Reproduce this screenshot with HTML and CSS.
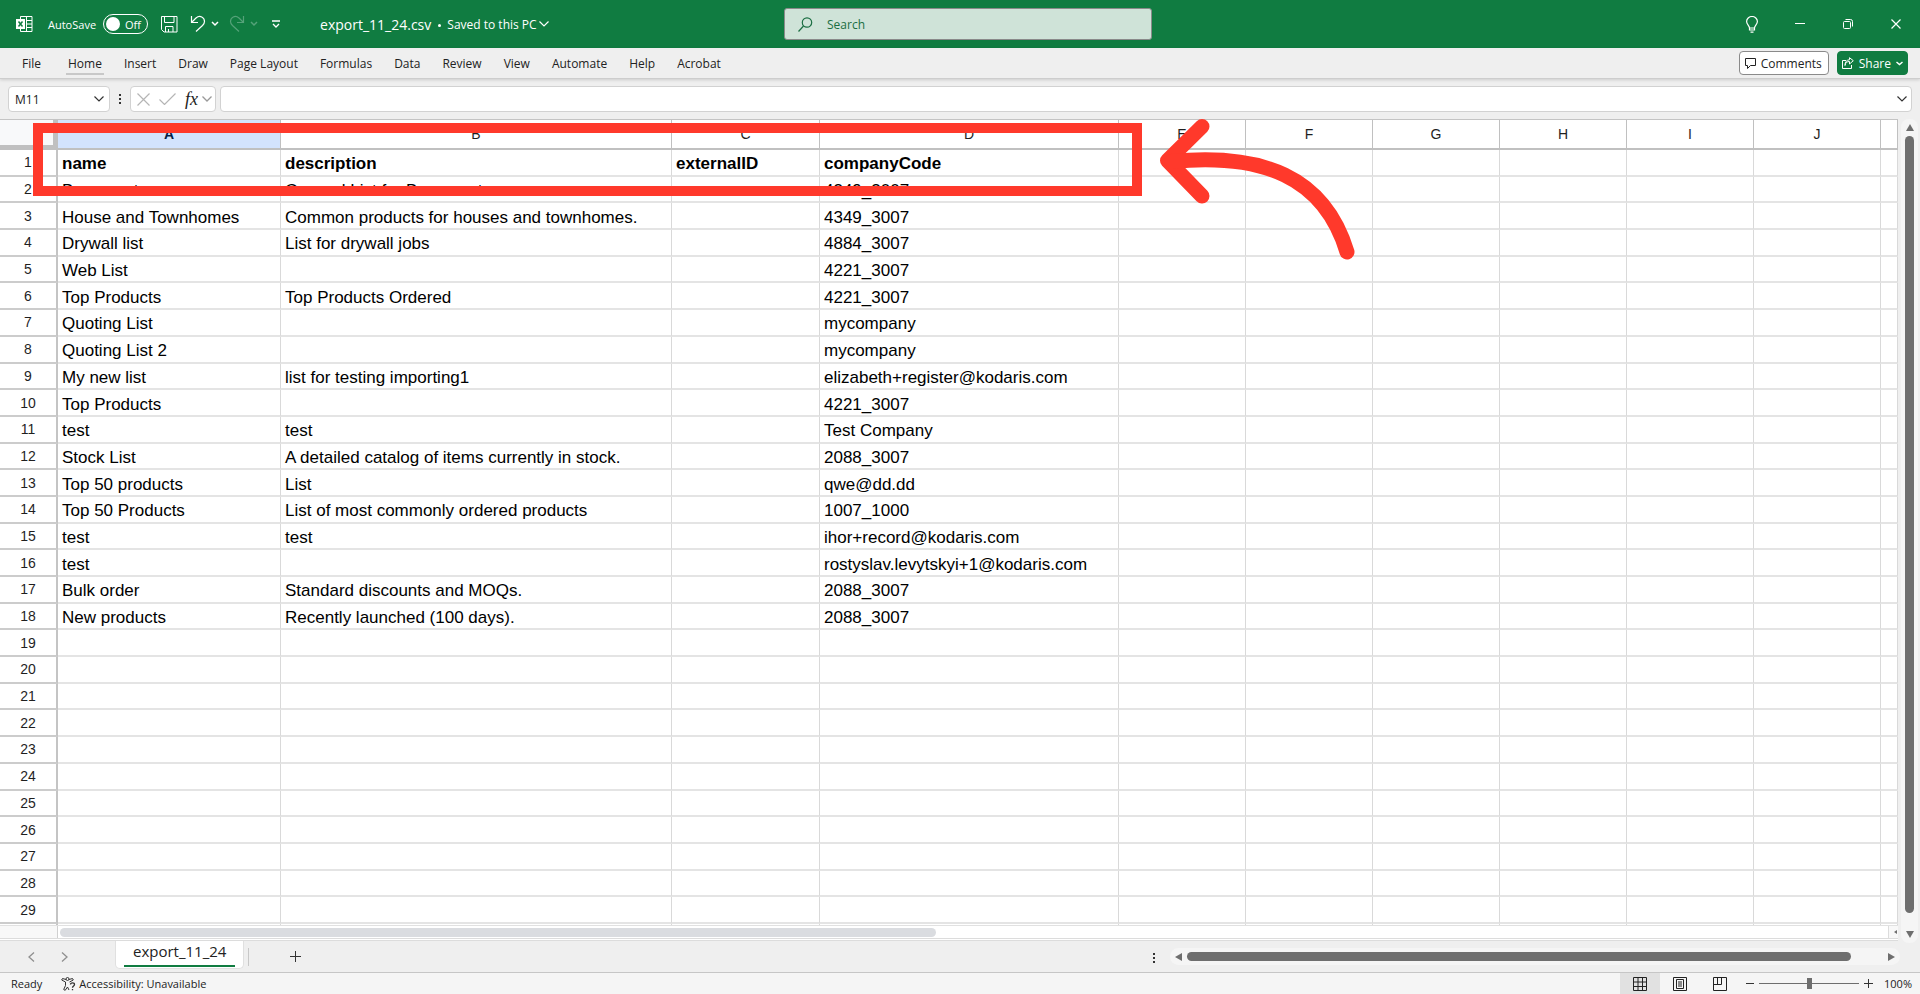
FILE: index.html
```html
<!DOCTYPE html>
<html lang="en">
<head>
  <meta charset="UTF-8">
  <meta name="viewport" content="width=device-width, initial-scale=1.0">
  <title>export_11_24.csv</title>
  <link rel="stylesheet" href="styles.css">
</head>
<body>
  <header class="titlebar">
    <div class="title-left">
      <svg class="app-icon" width="17" height="16" viewBox="0 0 17 16" fill="none" stroke="#fff">
        <path d="M4.500 3V.5H16v15H4.500V13M10.500.5v15M10 4.500h6M10 8h6M10 11.500h6"/>
        <path d="M0 3h9v10H0z" fill="#fff" stroke="none"/>
        <path d="M2.500 5.500l4 5M6.500 5.500l-4 5" stroke="#107c41" stroke-width="1.500"/>
      </svg>
      <label class="autosave" for="autosave">AutoSave</label>
      <span class="toggle">
        <input type="checkbox" id="autosave" role="switch">
        <span class="toggle-text">Off</span>
      </span>
      <button class="tool save" aria-label="Save">
        <svg width="17" height="17" viewBox="0 0 17 17" fill="none" stroke="currentColor">
          <path d="M.5.5h15.500v15.500H3L.5 13.500zM3.500.5v6h9.500v-6M4.500 16v-5.500h7.500V16M7.500 13v3"/>
        </svg>
      </button>
      <button class="tool undo" aria-label="Undo">
        <svg width="29" height="18" viewBox="0 0 29 18" fill="none" stroke="currentColor" stroke-width="1.200">
          <path d="M1.500 1v6.500H8M1.500 7.500L6 3c4-3.500 8.500-.5 8.500 3.500 0 2-1 3-2 4L6 16.500"/>
          <path d="M22 7l3 3 3-3" stroke-width="1.500"/>
        </svg>
      </button>
      <button class="tool redo" aria-label="Redo" disabled>
        <svg width="29" height="18" viewBox="0 0 29 18" fill="none" stroke="currentColor" stroke-width="1.200">
          <path d="M14.500 1v6.500H8M14.500 7.500L10 3C6-.5 1.500 2.500 1.500 6.500c0 2 1 3 2 4L10 16.500"/>
          <path d="M22 7l3 3 3-3" stroke-width="1.500"/>
        </svg>
      </button>
      <button class="tool more" aria-label="Customize Quick Access Toolbar">
        <svg width="8" height="8" viewBox="0 0 8 8" fill="none" stroke="currentColor" stroke-width="1.300">
          <path d="M0 1h8M1 4l3 3 3-3"/>
        </svg>
      </button>
      <span class="file-name">export_11_24.csv</span>
      <span class="dot"></span>
      <button class="tool saved">Saved to this PC
        <svg width="10" height="6" viewBox="0 0 10 6" fill="none" stroke="currentColor" stroke-width="1.200">
          <path d="M.5.5L5 5 9.500.5"/>
        </svg>
      </button>
    </div>
    <div class="search">
      <svg width="15" height="15" viewBox="0 0 15 15" fill="none" stroke="#1b6e42" stroke-width="1.200">
        <circle cx="9" cy="5.500" r="4.700"/>
        <path d="M5.500 9L.5 14.500"/>
      </svg>
      <input type="text" placeholder="Search" aria-label="Search">
    </div>
    <div class="title-right">
      <button class="tool" aria-label="Tips">
        <svg width="12" height="17" viewBox="0 0 12 17" fill="none" stroke="currentColor" stroke-width="1.200">
          <path d="M3.500 12c0-2.500-2.900-3.500-2.900-6.500a5.400 5 0 0 1 10.800 0c0 3-2.900 4-2.900 6.500zM3.500 12v2h5v-2M4.500 16.200h3"/>
        </svg>
      </button>
      <button class="tool" aria-label="Minimize">
        <svg width="10" height="10" viewBox="0 0 10 10" stroke="currentColor"><path d="M0 4.500h10"/></svg>
      </button>
      <button class="tool" aria-label="Restore">
        <svg width="10" height="10" viewBox="0 0 10 10" fill="none" stroke="currentColor">
          <rect x=".5" y="2.500" width="7" height="7" rx="1"/>
          <path d="M2.500.5h5a2 2 0 0 1 2 2v5"/>
        </svg>
      </button>
      <button class="tool" aria-label="Close">
        <svg width="10" height="10" viewBox="0 0 10 10" stroke="currentColor" stroke-width="1.200"><path d="M.5.5l9 9M9.500.5l-9 9"/></svg>
      </button>
    </div>
  </header>

  <nav class="ribbon">
    <button class="tab">File</button>
    <button class="tab active">Home</button>
    <button class="tab">Insert</button>
    <button class="tab">Draw</button>
    <button class="tab">Page Layout</button>
    <button class="tab">Formulas</button>
    <button class="tab">Data</button>
    <button class="tab">Review</button>
    <button class="tab">View</button>
    <button class="tab">Automate</button>
    <button class="tab">Help</button>
    <button class="tab">Acrobat</button>
    <div class="ribbon-actions">
      <button class="comments">
        <svg width="11" height="11" viewBox="0 0 11 11" fill="none" stroke="currentColor">
          <path d="M.5.5h10v7H5.500l-3 3v-3h-2z"/>
        </svg>
        Comments
      </button>
      <button class="share">
        <svg width="12" height="12" viewBox="0 0 12 12" fill="none" stroke="currentColor">
          <path d="M4 3.500H.5v8h9V8M3 8.500c.5-3 2-4 4.500-4V7L11.300 3.700 7.500.7v2C4.500 3 3 5 3 8.500z"/>
        </svg>
        Share
        <svg width="7" height="5" viewBox="0 0 7 5" fill="none" stroke="currentColor" stroke-width="1.500">
          <path d="M.5 1l3 2.500 3-2.500"/>
        </svg>
      </button>
    </div>
  </nav>

  <div class="formula-bar">
    <div class="name-box">
      <select aria-label="Name box"><option>M11</option></select>
      <svg width="10" height="6" viewBox="0 0 10 6" fill="none" stroke="#333" stroke-width="1.200"><path d="M.5.5L5 5 9.500.5"/></svg>
    </div>
    <span class="grip"></span>
    <div class="fx-box">
      <button class="tool" aria-label="Cancel">
        <svg width="13" height="13" viewBox="0 0 13 13" stroke="#b5b5b5" stroke-width="1.200"><path d="M.5.5l12 12M12.500.5l-12 12"/></svg>
      </button>
      <button class="tool" aria-label="Enter">
        <svg width="17" height="12" viewBox="0 0 17 12" fill="none" stroke="#b5b5b5" stroke-width="1.200"><path d="M.5 6.500l5 5L16.500.5"/></svg>
      </button>
      <button class="tool fx" aria-label="Insert function">fx</button>
      <svg width="10" height="6" viewBox="0 0 10 6" fill="none" stroke="#999" stroke-width="1.300"><path d="M.5.5L5 5 9.500.5"/></svg>
    </div>
    <div class="formula">
      <input type="text" aria-label="Formula">
      <svg width="10" height="6" viewBox="0 0 10 6" fill="none" stroke="#333" stroke-width="1.200"><path d="M.5.5L5 5 9.500.5"/></svg>
    </div>
  </div>

  <main class="workspace">
    <div class="sheet">
      <div class="sheet-view">
        <table class="grid">
          <colgroup>
            <col class="col-num"><col class="col-a"><col class="col-b"><col class="col-c"><col class="col-d">
            <col class="col-std"><col class="col-std"><col class="col-std"><col class="col-std"><col class="col-std"><col class="col-std">
            <col>
          </colgroup>
          <thead>
            <tr>
              <th class="corner"></th>
              <th class="selected">A</th><th>B</th><th>C</th><th>D</th><th>E</th><th>F</th>
              <th>G</th><th>H</th><th>I</th><th>J</th><th></th>
            </tr>
          </thead>
          <tbody id="rows"></tbody>
        </table>
      </div>
      <div class="inner-scroll">
        <span class="inner-corner"></span>
        <span class="inner-track"><span class="inner-thumb"></span></span>
        <span class="inner-end"><i class="arrow left small"></i></span>
      </div>
    </div>
    <div class="v-scroll">
      <i class="arrow up"></i>
      <span class="v-thumb"></span>
      <i class="arrow down"></i>
    </div>

    <!-- header row callout -->
    <div class="callout"></div>
    <svg class="callout-arrow" width="200" height="150" viewBox="0 0 200 150" fill="none" stroke="#ff392b" stroke-width="15" stroke-linecap="round" stroke-linejoin="round">
      <path d="M52 17.500L17.500 51.500 52 87"/>
      <path d="M22 52.500C112 44 174 67 197 143"/>
    </svg>
  </main>

  <div class="tabs-bar">
    <button class="tool nav" aria-label="Previous sheet">
      <svg width="7" height="10" viewBox="0 0 7 10" fill="none" stroke="#8f8f8f" stroke-width="1.300"><path d="M6 .5L1 5l5 4.500"/></svg>
    </button>
    <button class="tool nav" aria-label="Next sheet">
      <svg width="7" height="10" viewBox="0 0 7 10" fill="none" stroke="#8f8f8f" stroke-width="1.300"><path d="M1 .5L6 5 1 9.500"/></svg>
    </button>
    <button class="sheet-tab"><span>export_11_24</span></button>
    <span class="divider"></span>
    <button class="tool add" aria-label="New sheet">
      <svg width="11" height="11" viewBox="0 0 11 11" stroke="#333"><path d="M0 5.500h11M5.500 0v11"/></svg>
    </button>
    <span class="grip"></span>
    <div class="h-scroll">
      <i class="arrow left"></i>
      <span class="h-thumb"></span>
      <i class="arrow right"></i>
    </div>
  </div>

  <footer class="status">
    <span class="ready">Ready</span>
    <svg class="a11y" width="15" height="14" viewBox="0 0 15 14" fill="none" stroke="#333">
      <circle cx="6.500" cy="2" r="1.500"/>
      <path d="M5 2.500L1.500 1.500.7 3 4.500 5v3.500l-1.800 4 1.500.8L6.500 10l1.500 3M8 2.500l3.500-1 .8 1.500L8.500 5"/>
      <path d="M9.500 7.500c0-2.300 4-2.300 4 0 0 1.500-2 1.500-2 3.300M11.500 12v1.300" stroke-width="1.300"/>
    </svg>
    <span class="a11y-text">Accessibility: Unavailable</span>
    <div class="views">
      <button class="view active" aria-label="Normal">
        <svg width="14" height="14" viewBox="0 0 14 14" fill="none" stroke="#222"><path d="M.5.5h13v13H.5zM5 .5v13M9.500.5v13M.5 5h13M.5 9.500h13"/></svg>
      </button>
      <button class="view" aria-label="Page Layout view">
        <svg width="14" height="14" viewBox="0 0 14 14" fill="none" stroke="#222"><path d="M.5.5h13v13H.5zM3.500 2.500h7v9h-7zM5 5h4M5 7h4M5 9h4"/></svg>
      </button>
      <button class="view" aria-label="Page Break Preview">
        <svg width="14" height="14" viewBox="0 0 14 14" fill="none" stroke="#222"><path d="M.5.5h13v13H.5zM.5 7.500h8v-7M4.500.5v7"/></svg>
      </button>
    </div>
    <div class="zoom">
      <button class="tool" aria-label="Zoom out"><svg width="8" height="9" viewBox="0 0 8 9" stroke="#333"><path d="M0 4.500h8"/></svg></button>
      <input type="range" min="0" max="200" value="100" aria-label="Zoom">
      <button class="tool" aria-label="Zoom in"><svg width="9" height="9" viewBox="0 0 9 9" stroke="#333"><path d="M0 4.500h9M4.500 0v9"/></svg></button>
      <span class="percent">100%</span>
    </div>
  </footer>

  <script src="sheet.js"></script>
</body>
</html>
```

FILE: styles.css
```css
* {
  box-sizing: border-box;
}
body {
  margin: 0;
  height: 100vh;
  display: flex;
  flex-direction: column;
  overflow: hidden;
  background: #efefef;
  color: #222;
  font-family: "Open Sans", "Noto Sans", sans-serif;
  font-size: 12px;
}
button,
input,
select {
  font: inherit;
  color: inherit;
  margin: 0;
}
svg {
  display: block;
  flex: none;
}
.tool {
  display: flex;
  align-items: center;
  padding: 0;
  border: none;
  background: none;
}

/* title bar */
.titlebar {
  flex: none;
  display: grid;
  grid-template-columns: 1fr 368px 1fr;
  align-items: center;
  height: 48px;
  padding-left: 16px;
  background: #107c41;
  color: #fff;
}
.title-left {
  display: flex;
  align-items: center;
  white-space: nowrap;
}
.autosave {
  margin-left: 15px;
  font-size: 11px;
}
.toggle {
  display: flex;
  align-items: center;
  width: 45px;
  height: 20px;
  margin-left: 7px;
  padding-left: 2px;
  border: 1px solid #fff;
  border-radius: 10px;
  font-size: 11px;
}
.toggle input {
  appearance: none;
  width: 14px;
  height: 14px;
  border-radius: 50%;
  background: #fff;
}
.toggle-text {
  margin-left: 5px;
}
.save {
  margin-left: 13px;
}
.undo {
  margin-left: 12px;
}
.redo {
  margin-left: 10px;
  color: #55a279;
}
.more {
  margin-left: 14px;
}
.file-name {
  margin-left: 40px;
  font-size: 14px;
}
.dot {
  width: 3px;
  height: 3px;
  margin: 2px 6px 0 7px;
  border-radius: 50%;
  background: #fff;
}
.saved {
  gap: 2px;
}
.search {
  display: flex;
  align-items: center;
  gap: 14px;
  height: 32px;
  padding: 0 13px;
  border: 1px solid #8a8a8a;
  border-radius: 3px;
  background: #cfe3d8;
}
.search input {
  flex: 1;
  min-width: 0;
  padding: 0;
  border: none;
  outline: none;
  background: none;
}
.search input::placeholder {
  color: #1b6e42;
  opacity: 1;
}
.title-right {
  display: flex;
  justify-content: flex-end;
}
.title-right .tool {
  width: 48px;
  height: 48px;
  justify-content: center;
}

/* ribbon tabs */
.ribbon {
  flex: none;
  position: relative;
  z-index: 1;
  display: flex;
  align-items: center;
  height: 31px;
  padding: 0 12px 0 11px;
  border-bottom: 1px solid #cdcdcd;
  box-shadow: 0 1px 3px rgba(0, 0, 0, 0.15);
}
.tab {
  height: 31px;
  padding: 0 11px;
  border: none;
  background: none;
}
.tab:first-child {
  margin-right: 5px;
}
.tab.active {
  background: linear-gradient(#c8c8c8, #c8c8c8) center 25px / calc(100% - 18px) 2px no-repeat;
}
.ribbon-actions {
  display: flex;
  gap: 8px;
  margin-left: auto;
}
.comments,
.share {
  display: flex;
  align-items: center;
  gap: 5px;
  height: 24px;
  border: 1px solid #8a8a8a;
  border-radius: 4px;
  background: #fff;
  padding: 0 6px 0 5px;
}
.share {
  border-color: #107c41;
  background: #107c41;
  color: #fff;
  padding: 0 4px;
}

/* formula bar */
.formula-bar {
  flex: none;
  display: flex;
  height: 40px;
  padding: 7px 8px;
}
.name-box,
.fx-box,
.formula {
  display: flex;
  align-items: center;
  height: 26px;
  border: 1px solid #d2d2d2;
  border-radius: 4px;
  background: #fff;
}
.name-box {
  width: 102px;
  padding: 0 5px 0 6px;
}
.name-box select {
  flex: 1;
  appearance: none;
  padding: 0;
  border: none;
  background: none;
}
.grip {
  width: 2px;
  height: 10px;
  margin: 8px 9px 0;
  background: repeating-linear-gradient(#333 0 2px, transparent 2px 4px);
}
.fx-box {
  width: 86px;
  gap: 7px;
  padding: 0 2px 0 6px;
}
.fx-box .tool + .tool {
  margin-left: 2px;
}
.fx {
  font-family: "Liberation Serif", serif;
  font-style: italic;
  font-size: 18px;
}
.fx-box > svg {
  margin-left: -3px;
}
.formula {
  flex: 1;
  margin-left: 4px;
  padding-right: 4px;
}
.formula input {
  flex: 1;
  min-width: 0;
  border: none;
  outline: none;
  background: none;
}

/* sheet */
.workspace {
  flex: 1;
  min-height: 0;
  position: relative;
  display: flex;
}
.sheet {
  flex: 1;
  min-width: 0;
  display: flex;
  flex-direction: column;
  border-top: 1px solid #c4c4c4;
  background: #fff;
}
.sheet-view {
  flex: 1;
  min-height: 0;
  overflow: hidden;
}
.grid {
  table-layout: fixed;
  width: 100%;
  height: calc(100% + 26px);
  border-collapse: separate;
  border-spacing: 0;
  font-family: "Liberation Sans", Arial, sans-serif;
  font-size: 17px;
  line-height: 20px;
  color: #000;
}
.col-num {
  width: 58px;
}
.col-a {
  width: 223px;
}
.col-b {
  width: 391px;
}
.col-c {
  width: 148px;
}
.col-d {
  width: 299px;
}
.col-std {
  width: 127px;
}
.grid th,
.grid td {
  padding: 0;
  white-space: nowrap;
}
.grid tbody tr {
  height: 26px;
}
.grid td {
  padding: 4px 4px 0;
  border-right: 1px solid #d9d9d9;
  border-bottom: 2px solid #e4e4e4;
}
.grid thead th {
  height: 30px;
  border-right: 1px solid #c0c0c0;
  border-bottom: 2px solid #c0c0c0;
  font-size: 14px;
  font-weight: normal;
  color: #1f1f1f;
}
.grid thead .selected {
  background: #d3e3fd;
  font-weight: bold;
  color: #041e49;
}
.grid thead .corner {
  border-right: 5px solid #c0c0c0;
  border-bottom: 5px solid #c0c0c0;
  background: #f8f9fa;
}
.grid tbody th {
  border-right: 2px solid #c4c4c4;
  border-bottom: 2px solid #cccccc;
  font-size: 14px;
  font-weight: normal;
  color: #1f1f1f;
}
.grid tbody tr:first-child td {
  font-weight: bold;
}
.inner-scroll {
  flex: none;
  display: flex;
  height: 16px;
  border-top: 1px solid #e1e1e1;
  border-bottom: 3px double #dcdcdc;
}
.inner-corner {
  width: 58px;
  border-right: 1px solid #d0d0d0;
  background: #f8f8f8;
}
.inner-track {
  flex: 1;
  padding: 2px 2px 1px;
}
.inner-thumb {
  display: block;
  width: 48%;
  height: 9px;
  border-radius: 5px;
  background: #dadce0;
}
.inner-end {
  display: flex;
  align-items: center;
  justify-content: flex-end;
  width: 10px;
  padding-right: 1px;
  border-left: 1px solid #dcdcdc;
  background: #f8f8f8;
}
.arrow {
  width: 0;
  height: 0;
  border: 4px solid transparent;
}
.arrow.up {
  border-top: none;
  border-bottom: 7px solid #6e6e6e;
}
.arrow.down {
  border-bottom: none;
  border-top: 7px solid #6e6e6e;
}
.arrow.left {
  border-left: none;
  border-right: 7px solid #6e6e6e;
}
.arrow.right {
  border-right: none;
  border-left: 7px solid #6e6e6e;
}
.arrow.small {
  border-width: 2px 3px 2px 0;
}
.v-scroll {
  display: flex;
  flex-direction: column;
  align-items: center;
  width: 17px;
  margin: 0 2px -2px 3px;
  padding: 5px 0;
  border-radius: 8px;
  background: #f5f5f5;
}
.v-thumb {
  flex: 1;
  width: 9px;
  margin: 5px 0 18px;
  border-radius: 5px;
  background: #6e6e6e;
}

/* callout drawn over the sheet */
.callout {
  position: absolute;
  left: 33px;
  top: 4px;
  width: 1109px;
  height: 73px;
  border: 10px solid #ff392b;
}
.callout-arrow {
  position: absolute;
  left: 1150px;
  top: -10px;
  overflow: visible;
}

/* sheet tabs */
.tabs-bar {
  flex: none;
  display: flex;
  align-items: center;
  height: 31px;
  padding: 0 20px 0 28px;
}
.nav {
  width: 8px;
}
.nav + .nav {
  margin-left: 25px;
}
.sheet-tab {
  align-self: flex-start;
  height: 28px;
  margin-left: 46px;
  padding: 0 8px;
  border: 1px solid #e0e0e0;
  border-top: none;
  border-radius: 0 0 5px 5px;
  background: #fff;
  font-size: 15px;
}
.sheet-tab span {
  display: block;
  height: 25px;
  padding: 0 9px;
  border-bottom: 2px solid #107c41;
  line-height: 18px;
}
.divider {
  width: 1px;
  height: 18px;
  margin-left: 4px;
  background: #c8c8c8;
}
.add {
  margin-left: 41px;
}
.tabs-bar .grip {
  margin: 2px 15px 0 auto;
}
.h-scroll {
  display: flex;
  align-items: center;
  width: 39%;
  height: 17px;
  padding: 0 5px;
  border-radius: 9px;
  background: #f5f5f5;
}
.h-thumb {
  flex: 1;
  height: 9px;
  margin: 0 37px 0 5px;
  border-radius: 5px;
  background: #6e6e6e;
}

/* status bar */
.status {
  flex: none;
  display: flex;
  align-items: center;
  height: 22px;
  padding: 0 8px 0 11px;
  border-top: 1px solid #c6c6c6;
  background: #f5f5f5;
  font-size: 11px;
}
.a11y {
  margin-left: 19px;
}
.a11y-text {
  margin-left: 3px;
}
.views {
  display: flex;
  margin-left: auto;
}
.view {
  display: flex;
  align-items: center;
  justify-content: center;
  width: 40px;
  height: 21px;
  padding: 0;
  border: none;
  background: none;
}
.view.active {
  background: #e1e1e1;
}
.zoom {
  display: flex;
  align-items: center;
  margin-left: 6px;
}
.zoom input {
  appearance: none;
  width: 100px;
  height: 11px;
  margin: 0 5px;
  background: linear-gradient(#6e6e6e, #6e6e6e) center / 100% 1px no-repeat;
}
.zoom input::-webkit-slider-thumb {
  appearance: none;
  width: 5px;
  height: 11px;
  background: #6e6e6e;
}
.percent {
  margin-left: 11px;
}
```

FILE: sheet.js
```js
const rows = [
  ['name', 'description', 'externalID', 'companyCode'],
  ['Basement', 'General List for Basements', '', '4349_3007'],
  ['House and Townhomes', 'Common products for houses and townhomes.', '', '4349_3007'],
  ['Drywall list', 'List for drywall jobs', '', '4884_3007'],
  ['Web List', '', '', '4221_3007'],
  ['Top Products', 'Top Products Ordered', '', '4221_3007'],
  ['Quoting List', '', '', 'mycompany'],
  ['Quoting List 2', '', '', 'mycompany'],
  ['My new list', 'list for testing importing1', '', 'elizabeth+register@kodaris.com'],
  ['Top Products', '', '', '4221_3007'],
  ['test', 'test', '', 'Test Company'],
  ['Stock List', 'A detailed catalog of items currently in stock.', '', '2088_3007'],
  ['Top 50 products', 'List', '', 'qwe@dd.dd'],
  ['Top 50 Products', 'List of most commonly ordered products', '', '1007_1000'],
  ['test', 'test', '', 'ihor+record@kodaris.com'],
  ['test', '', '', 'rostyslav.levytskyi+1@kodaris.com'],
  ['Bulk order', 'Standard discounts and MOQs.', '', '2088_3007'],
  ['New products', 'Recently launched (100 days).', '', '2088_3007']
];

const ROW_COUNT = 30;
const COL_COUNT = 11;
const body = document.getElementById('rows');

for (let r = 0; r < ROW_COUNT; r++) {
  const tr = body.insertRow();
  const num = document.createElement('th');
  // the last row is cut off by the scrollbar
  num.textContent = r < ROW_COUNT - 1 ? r + 1 : '';
  tr.appendChild(num);
  for (let c = 0; c < COL_COUNT; c++) {
    tr.insertCell().textContent = (rows[r] && rows[r][c]) || '';
  }
}
```
